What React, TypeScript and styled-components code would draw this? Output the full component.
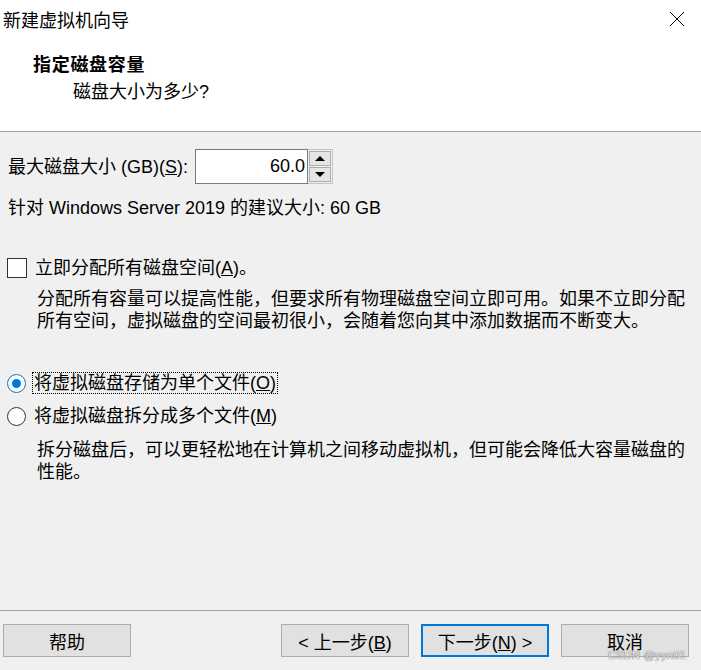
import React from 'react';
import styled, { createGlobalStyle } from 'styled-components';

const GlobalStyle = createGlobalStyle`
  html, body {
    margin: 0;
    padding: 0;
    background: #f0f0f0;
  }
  * {
    box-sizing: border-box;
  }
`;

const Window = styled.div`
  position: relative;
  width: 701px;
  height: 670px;
  display: flex;
  flex-direction: column;
  background: #f0f0f0;
  color: #000;
  font-family: 'Liberation Sans', 'Noto Sans CJK SC', sans-serif;
  font-size: 18px;
  overflow: hidden;
`;

const TitleBar = styled.div`
  height: 38px;
  display: flex;
  align-items: center;
  justify-content: space-between;
  padding: 0 16px 0 3px;
  background: #fff;
`;

const Header = styled.div`
  height: 94px;
  padding: 15px 0 0 33px;
  background: #fff;
  border-bottom: 1px solid #a0a0a0;
`;

const Heading = styled.div`
  font-weight: bold;
  line-height: 24px;
  letter-spacing: 0.7px;
`;

const Subheading = styled.div`
  margin-top: 3px;
  padding-left: 40px;
  line-height: 24px;
`;

const Body = styled.div`
  flex: 1;
  display: flex;
  flex-direction: column;
  padding: 17px 0 0 7px;
`;

const SizeRow = styled.div`
  display: flex;
  align-items: center;
  height: 35px;
`;

const SizeLabel = styled.label`
  width: 188px;
  padding-left: 1px;
  line-height: 22px;
`;

const NumberBox = styled.div`
  width: 113px;
  height: 35px;
  background: #fff;
  border: 1px solid #7a7a7a;
  display: flex;
  align-items: center;
  justify-content: flex-end;
  padding-right: 2px;
`;

const Spinner = styled.div`
  width: 25px;
  height: 35px;
  display: flex;
  flex-direction: column;
  gap: 1px;
  padding: 1px;
  border: 1px solid #c4c4c4;
  border-left: none;
  background: #f0f0f0;
`;

const SpinButton = styled.div`
  flex: 1;
  display: flex;
  align-items: center;
  justify-content: center;
  background: #e5e5e5;
  border: 1px solid #adadad;
`;

const Arrow = styled.div<{ $up?: boolean }>`
  width: 0;
  height: 0;
  border-left: 5px solid transparent;
  border-right: 5px solid transparent;
  ${({ $up }) =>
    $up ? 'border-bottom: 5px solid #000;' : 'border-top: 5px solid #000;'}
`;

const Hint = styled.div<{ $gap: number }>`
  margin-top: ${({ $gap }) => $gap}px;
  padding-left: 1px;
  line-height: 22px;
`;

const OptionRow = styled.div<{ $gap: number }>`
  margin-top: ${({ $gap }) => $gap}px;
  height: 22px;
  display: flex;
  align-items: center;
`;

const CheckBox = styled.div`
  width: 20px;
  height: 20px;
  background: #fff;
  border: 1px solid #333;
`;

const Radio = styled.div<{ $checked?: boolean }>`
  width: 19px;
  height: 19px;
  border-radius: 50%;
  background: #fff;
  border: 1px solid ${({ $checked }) => ($checked ? '#0078d7' : '#333')};
  display: flex;
  align-items: center;
  justify-content: center;

  &::after {
    content: '';
    width: 9px;
    height: 9px;
    border-radius: 50%;
    background: ${({ $checked }) => ($checked ? '#0078d7' : 'transparent')};
  }
`;

const OptionLabel = styled.span<{ $focused?: boolean }>`
  margin-left: 6px;
  padding: 0 1px;
  line-height: 20px;
  border: 1px dotted ${({ $focused }) => ($focused ? '#000' : 'transparent')};
`;

const Description = styled.p<{ $gap: number }>`
  margin: ${({ $gap }) => $gap}px 0 0;
  padding-left: 30px;
  line-height: 22px;
  white-space: nowrap;
`;

const Footer = styled.div`
  display: flex;
  align-items: center;
  gap: 12px;
  padding: 13px 12px 13px 3px;
  border-top: 1px solid #a0a0a0;
`;

const Spacer = styled.div`
  flex: 1;
`;

const Button = styled.button<{ $primary?: boolean }>`
  width: 128px;
  height: 33px;
  margin: 0;
  padding: 0;
  background: #e1e1e1;
  border: ${({ $primary }) =>
    $primary ? '2px solid #0078d7' : '1px solid #adadad'};
  font: inherit;
  color: #000;
`;

const Watermark = styled.div`
  position: absolute;
  right: 15px;
  bottom: 9px;
  font-family: 'Liberation Sans', sans-serif;
  font-size: 11px;
  letter-spacing: 0.3px;
  color: rgba(255, 255, 255, 0.9);
  text-shadow: 0 0 1px #666, 0 0 1px #666;
`;

const CloseIcon = () => (
  <svg width="16" height="16" viewBox="0 0 16 16">
    <path d="M1 1L15 15M15 1L1 15" stroke="#000" strokeWidth="1" fill="none" />
  </svg>
);

export default function App() {
  return (
    <Window>
      <GlobalStyle />
      <TitleBar>
        <span>新建虚拟机向导</span>
        <CloseIcon />
      </TitleBar>

      <Header>
        <Heading>指定磁盘容量</Heading>
        <Subheading>磁盘大小为多少?</Subheading>
      </Header>

      <Body>
        <SizeRow>
          <SizeLabel>
            最大磁盘大小 (GB)(<u>S</u>):
          </SizeLabel>
          <NumberBox>60.0</NumberBox>
          <Spinner>
            <SpinButton>
              <Arrow $up />
            </SpinButton>
            <SpinButton>
              <Arrow />
            </SpinButton>
          </Spinner>
        </SizeRow>

        <Hint $gap={13}>针对 Windows Server 2019 的建议大小: 60 GB</Hint>

        <OptionRow $gap={38}>
          <CheckBox />
          <OptionLabel>
            立即分配所有磁盘空间(<u>A</u>)。
          </OptionLabel>
        </OptionRow>
        <Description $gap={9}>
          分配所有容量可以提高性能，但要求所有物理磁盘空间立即可用。如果不立即分配
          <br />
          所有空间，虚拟磁盘的空间最初很小，会随着您向其中添加数据而不断变大。
        </Description>

        <OptionRow $gap={40}>
          <Radio $checked />
          <OptionLabel $focused>
            将虚拟磁盘存储为单个文件(<u>O</u>)
          </OptionLabel>
        </OptionRow>
        <OptionRow $gap={11}>
          <Radio />
          <OptionLabel>
            将虚拟磁盘拆分成多个文件(<u>M</u>)
          </OptionLabel>
        </OptionRow>
        <Description $gap={12}>
          拆分磁盘后，可以更轻松地在计算机之间移动虚拟机，但可能会降低大容量磁盘的
          <br />
          性能。
        </Description>
      </Body>

      <Footer>
        <Button>帮助</Button>
        <Spacer />
        <Button>
          &lt; 上一步(<u>B</u>)
        </Button>
        <Button $primary>
          下一步(<u>N</u>) &gt;
        </Button>
        <Button>取消</Button>
      </Footer>

      <Watermark>CSDN @yyn01</Watermark>
    </Window>
  );
}
